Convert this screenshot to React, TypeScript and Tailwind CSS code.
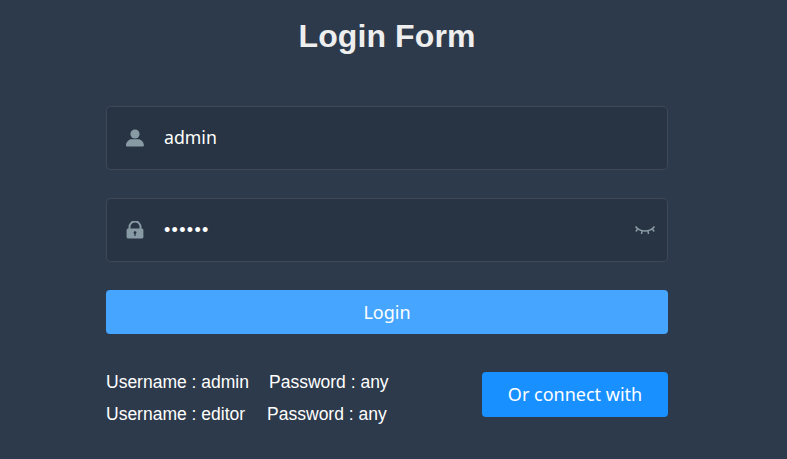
import React from "react";

function UserIcon() {
  return (
    <svg width="18" height="18" viewBox="0 0 18 18" fill="#889aa4">
      <circle cx="9" cy="5" r="4.6" />
      <path d="M0.6 17.4c-0.5 0-0.7-0.3-0.7-0.8 0-4 3.4-6.4 5.6-6.4h6.8c2.4 0 5.600 2.400 5.600 6.400 0 0.500-0.200 0.800-0.700 0.800z" />
    </svg>
  );
}

function LockIcon() {
  return (
    <svg width="18" height="18" viewBox="0 0 18 18">
      <path d="M3.500 8V6a5.500 5.500 0 0 1 11 0v2" fill="none" stroke="#889aa4" strokeWidth="2" />
      <rect x="0.600" y="7.400" width="16.800" height="10.200" rx="1.600" fill="#889aa4" />
      <circle cx="9" cy="11.600" r="1.400" fill="#283443" />
      <rect x="8.400" y="11.600" width="1.200" height="3.400" fill="#283443" />
    </svg>
  );
}

function EyeClosedIcon() {
  return (
    <svg width="22" height="12" viewBox="0 0 22 12" fill="none" stroke="#889aa4" strokeWidth="1.5">
      <path d="M1.500 2.500C6 8.500 16 8.500 20.500 2.500" />
      <path d="M3.800 5l-2 2.500M18.200 5l2 2.500M8 7l-0.500 3M14 7l0.500 3" />
    </svg>
  );
}

export default function App() {
  return (
    <div className="w-full h-[459px] overflow-hidden bg-[#2d3a4b] font-['Liberation_Sans',sans-serif]">
      <div className="w-[562px] ml-[106px] flex flex-col">
        <h3 className="text-[32px] leading-[37px] font-bold tracking-[0.1px] text-[#eeeeee] text-center mt-[18px] mb-[51px]">
          Login Form
        </h3>

        <div className="h-[64px] flex items-center border border-white/10 rounded-[5px] bg-[#283443] mb-[28px]">
          <span className="w-[18px] ml-[19px] mr-[20px] flex">
            <UserIcon />
          </span>
          <span className="text-white text-[17.7px] leading-[24px] -mt-[2px] font-['Noto_Sans','Noto_Sans_CJK_SC',sans-serif]">admin</span>
        </div>

        <div className="h-[64px] flex items-center border border-white/10 rounded-[5px] bg-[#283443] mb-[28px]">
          <span className="w-[18px] ml-[19px] mr-[20px] flex">
            <LockIcon />
          </span>
          <span className="text-white text-[18px] tracking-[1.3px] mt-[1px] flex-1">••••••</span>
          <span className="mr-[11px] flex">
            <EyeClosedIcon />
          </span>
        </div>

        <button className="h-[44px] w-full rounded-[4px] bg-[#46a6ff] text-white text-[18px] font-['Noto_Sans','Noto_Sans_CJK_SC',sans-serif] mb-[32px]">
          Login
        </button>

        <div className="flex items-start justify-between">
          <div className="text-white text-[17.5px] leading-[32px]">
            <div className="flex">
              <span>Username : admin</span>
              <span className="ml-[20px]">Password : any</span>
            </div>
            <div className="flex">
              <span>Username : editor</span>
              <span className="ml-[22px]">Password : any</span>
            </div>
          </div>
          <button className="h-[45px] w-[186px] mt-[6px] rounded-[4px] bg-[#1890ff] text-white text-[18px] font-['Noto_Sans','Noto_Sans_CJK_SC',sans-serif]">
            Or connect with
          </button>
        </div>
      </div>
    </div>
  );
}
